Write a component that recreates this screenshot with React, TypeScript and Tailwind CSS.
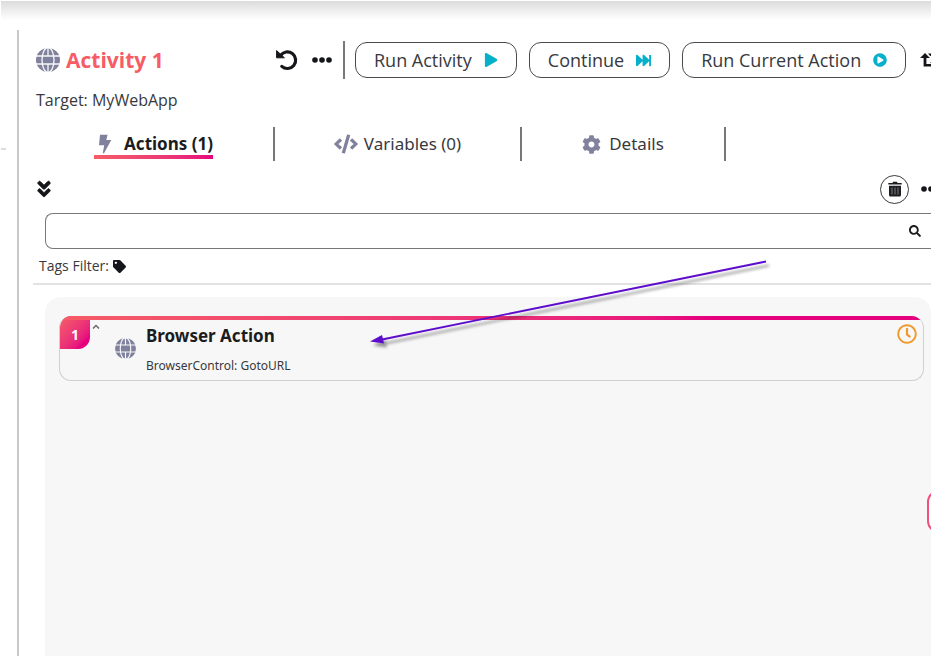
import React from "react";
import {
  FaPlay,
  FaFastForward,
  FaPlayCircle,
  FaCode,
  FaCog,
  FaAngleDoubleDown,
  FaSearch,
  FaTag,
  FaRegClock,
} from "react-icons/fa";

function Globe({ className }: { className: string }) {
  return (
    <svg viewBox="0 0 24 24" className={className} aria-hidden="true">
      <circle cx="12" cy="12" r="12" fill="#80829d" />
      <g fill="none" stroke="#f8f8fa" strokeWidth="1.3">
        <ellipse cx="12" cy="12" rx="6" ry="12.5" />
        <path d="M0 8h24M0 16h24M12 0v8M12 16v8" />
      </g>
    </svg>
  );
}

function Undo() {
  return (
    <svg viewBox="0 0 22 22" className="h-[22px] w-[22px]" aria-hidden="true">
      <path d="M4.500 6.500A8.300 8.300 0 1 1 5.800 17.400" fill="none" stroke="#15161a" strokeWidth="3.200" strokeLinecap="round" />
      <path d="M.6 1.600v7.200h7.800z" fill="#15161a" stroke="#15161a" strokeWidth="1" strokeLinejoin="round" />
    </svg>
  );
}

function Loop() {
  return (
    <svg viewBox="0 0 20 14" className="h-3.5 w-5" fill="#15161a" aria-hidden="true">
      <path d="M5 0 0 5h3.600v8.500H13L10.800 11H6.400V5H10z" />
      <path d="M15 14l5-5h-3.600V.5H8L10.200 3h3.400v6H10z" />
    </svg>
  );
}

function Bolt() {
  return (
    <svg viewBox="0 0 14 20" className="h-5 w-3.5 fill-[#80829d]" aria-hidden="true">
      <path d="M2 .8h7.600L8.300 6h5L6 19.200H4.800L6.200 11.200H1z" />
    </svg>
  );
}

function Trash() {
  return (
    <svg viewBox="0 0 14 16" className="h-4 w-3.5" aria-hidden="true">
      <path d="M1 4.8h12V14a1.5 1.5 0 0 1-1.5 1.5h-9A1.5 1.5 0 0 1 1 14zM.3 2h4.2L5 .8h4L9.500 2h4.200v1.500H.3z" fill="#1d1e22" />
      <path d="M4 6.500v7M7 6.500v7M10 6.500v7" stroke="#77787b" strokeWidth="1" />
    </svg>
  );
}

function Dots() {
  return (
    <svg viewBox="0 0 20 6" className="h-1.5 w-5 shrink-0 fill-[#15161a]" aria-hidden="true">
      <circle cx="3" cy="3" r="2.8" />
      <circle cx="10" cy="3" r="2.8" />
      <circle cx="17" cy="3" r="2.8" />
    </svg>
  );
}

function RunButton({ label, children }: { label: string; children: React.ReactNode }) {
  return (
    <button className="flex h-9 shrink-0 items-center gap-3 rounded-xl border border-[#4a4a4d] px-[18px] text-lg whitespace-nowrap text-[#38393d]">
      {label}
      <span className="text-[#06b0cb]">{children}</span>
    </button>
  );
}

export default function App() {
  return (
    <div className="relative flex h-screen flex-col overflow-hidden bg-white font-['Open_Sans',sans-serif] text-[#38393d]">
      <div className="mt-px ml-px h-[29px] shrink-0 bg-linear-to-b from-[#dcdcdc] to-white to-65%" />
      <div className="flex min-h-0 flex-1">
        <aside className="w-[17px] shrink-0 pt-[118px]">
          <div className="ml-px h-0.5 w-[5px] bg-[#dddddd]" />
        </aside>
        <main className="flex min-w-0 flex-1 flex-col border-l-2 border-[#c9c9c9]">
          <header className="mt-[11px] flex h-[38px] items-center pl-[17px]">
            <Globe className="mr-1.5 h-6 w-6 shrink-0" />
            <h1 className="w-[210px] shrink-0 text-[21px] leading-7 font-bold text-[#f65c66]">Activity 1</h1>
            <button aria-label="Undo" className="mr-3.5 shrink-0">
              <Undo />
            </button>
            <button aria-label="More options" className="mr-[11px] shrink-0">
              <Dots />
            </button>
            <div className="mr-2.5 h-[38px] w-0.5 shrink-0 bg-[#77777a]" />
            <div className="flex shrink-0 items-center gap-3">
              <RunButton label="Run Activity">
                <FaPlay size={14} />
              </RunButton>
              <RunButton label="Continue">
                <FaFastForward size={15} />
              </RunButton>
              <RunButton label="Run Current Action">
                <FaPlayCircle size={14} />
              </RunButton>
              <button aria-label="Loop" className="ml-0.5">
                <Loop />
              </button>
            </div>
          </header>

          <p className="mt-[9px] pl-[17px] text-base leading-6">Target: MyWebApp</p>

          <nav className="mt-3.5 flex h-[36px] items-center font-['Noto_Sans',sans-serif] text-[17px]">
            <div className="flex h-[34px] w-[256px] shrink-0 items-center justify-end border-r-2 border-[#77777a] pr-[60px]">
              <button className="relative flex h-[30px] items-center gap-3 pl-1 font-bold text-[#1b1c20]">
                <Bolt />
                <span>Actions (1)</span>
                <span className="absolute inset-x-0 bottom-0 h-1 bg-linear-to-r from-[#f65c66] to-[#e6007e]" />
              </button>
            </div>
            <div className="flex w-[247px] shrink-0 justify-center border-r-2 border-[#77777a]">
              <button className="flex h-[34px] items-center gap-1.5">
                <FaCode size={24} color="#80829d" />
                Variables (0)
              </button>
            </div>
            <div className="flex w-[204px] shrink-0 justify-center border-r-2 border-[#77777a]">
              <button className="flex h-[34px] items-center gap-2">
                <FaCog size={19} color="#80829d" />
                Details
              </button>
            </div>
          </nav>

          <div className="mt-[11px] flex h-8 items-center justify-between pl-[15px]">
            <button aria-label="Expand all" className="text-[20px] text-[#15161a]">
              <FaAngleDoubleDown stroke="currentColor" strokeWidth={24} />
            </button>
            <div className="-mr-2.5 flex items-center gap-3">
              <button aria-label="Delete" className="flex h-[29px] w-[29px] items-center justify-center rounded-full border border-[#38393d]">
                <Trash />
              </button>
              <button aria-label="More actions">
                <Dots />
              </button>
            </div>
          </div>

          <label className="mt-2 ml-[26px] flex h-[36px] items-center rounded-l-lg border border-r-0 border-[#77777a] pr-2.5">
            <input type="text" aria-label="Search actions" className="h-full min-w-0 flex-1 px-3 text-base outline-none" />
            <FaSearch size={12} color="#1d1e22" />
          </label>

          <div className="ml-3.5 flex h-[36px] items-center gap-1 border-b-2 border-[#e2e2e2] pl-1.5 text-sm">
            Tags Filter:
            <FaTag size={13} color="#15161a" />
          </div>

          <section className="relative mt-3 ml-[26px] min-h-0 flex-1 rounded-t-2xl bg-[#f7f7f7] pt-[19px] pr-[7px] pl-3.5">
            <article className="relative flex h-[65px] overflow-hidden rounded-xl border border-t-0 border-[#cfcfcf] font-['Noto_Sans',sans-serif]">
              <div className="absolute inset-x-0 top-0 h-1 bg-linear-to-r from-[#f65c66] to-[#e6007e] to-75%" />
              <div className="flex h-[33px] w-[30px] shrink-0 items-center justify-center rounded-br-xl bg-linear-to-br from-[#f65c66] to-[#e6007e] to-80% pt-1 text-sm font-bold text-white">
                1
              </div>
              <svg viewBox="0 0 8 6" className="mt-2 ml-0.5 h-1.5 w-2 fill-none stroke-[#66666a]" aria-hidden="true">
                <path d="M1 4.500 4 1.500l3 3" strokeWidth="1.400" />
              </svg>
              <Globe className="mt-[22px] ml-[15px] h-[21px] w-[21px] shrink-0" />
              <div className="ml-2.5 pt-2">
                <h2 className="text-[17px] leading-6 font-bold text-[#1b1c20]">Browser Action</h2>
                <p className="mt-2 text-xs leading-5">BrowserControl: GotoURL</p>
              </div>
              <FaRegClock size={20} color="#f0992b" className="mt-2 mr-1.5 ml-auto shrink-0" />
            </article>
            <button
              aria-label="Open side panel"
              className="absolute top-[193px] -right-9 h-[43px] w-10 rounded-xl border-2 border-[#f0517a] bg-white"
            />
          </section>
        </main>
      </div>

      <svg viewBox="0 0 410 100" className="pointer-events-none absolute top-[250px] left-[364px] h-[100px] w-[410px]" aria-hidden="true">
        <defs>
          <filter id="arrow-shadow" x="-5%" y="-10%" width="110%" height="130%">
            <feDropShadow dx="3" dy="4" stdDeviation="1.5" floodColor="#000000" floodOpacity="0.4" />
          </filter>
        </defs>
        <g filter="url(#arrow-shadow)">
          <path d="M402 11.500 18 89.500" stroke="#5c0acb" strokeWidth="1.800" />
          <path d="M6 91.500 18 85l2 8.500z" fill="#5c0acb" />
        </g>
      </svg>
    </div>
  );
}
